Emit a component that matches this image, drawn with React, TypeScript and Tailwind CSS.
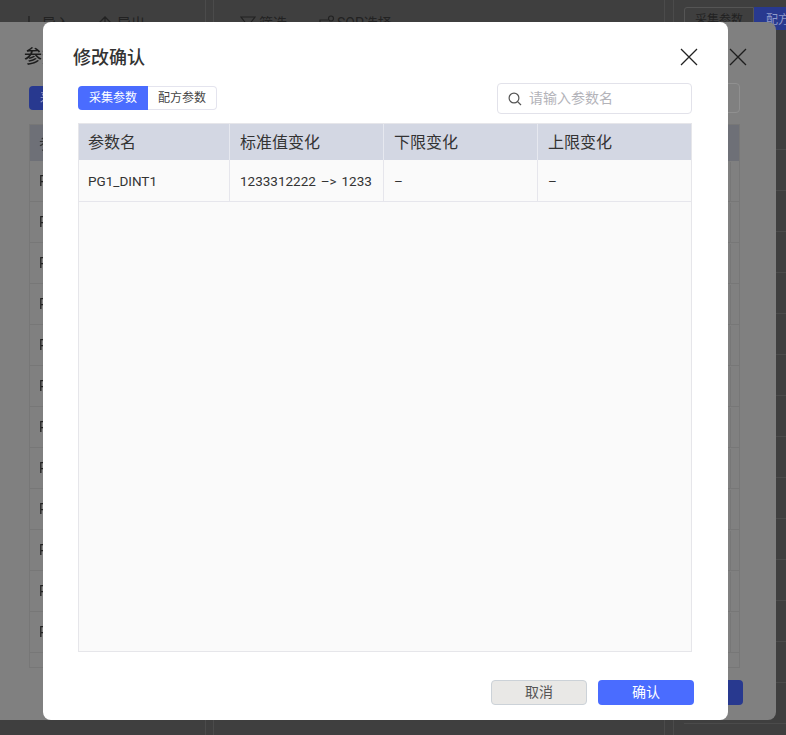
import React from "react";

const font = { fontFamily: 'Roboto, "Noto Sans CJK SC", sans-serif' };

function CloseIcon({ size = 20, className = "" }: { size?: number; className?: string }) {
  return (
    <svg width={size} height={size} viewBox="0 0 20 20" fill="none" stroke="currentColor" strokeWidth={1.25} className={className}>
      <path d="M2 2 L18 18 M18 2 L2 18" />
    </svg>
  );
}

function ArrowIcon({ up = false }: { up?: boolean }) {
  return (
    <svg width="14" height="16" viewBox="0 0 14 16" fill="none" stroke="#222" strokeWidth="1.3">
      {up ? <path d="M7 15 V2 M1.5 7.5 L7 2 L12.5 7.5" /> : <path d="M7 1 V14 M1.5 8.5 L7 14 L12.5 8.5" />}
    </svg>
  );
}

function Background() {
  const rows = Array.from({ length: 12 });
  return (
    <div className="flex h-full w-full">
      <div className="w-[206px] shrink-0 border-r border-[#4b4b4b] pl-[22px] pt-[13px]">
        <div className="flex items-center text-[14px] leading-[20px] text-[#222]">
          <ArrowIcon />
          <span className="ml-[6px] w-[56px]">导入</span>
          <ArrowIcon up />
          <span className="ml-[5px]">导出</span>
        </div>
      </div>
      <div className="ml-[7px] w-[452px] shrink-0 border-x border-[#4b4b4b] pl-[26px] pt-[13px]">
        <div className="flex items-center text-[14px] leading-[20px] text-[#222]">
          <svg width="16" height="16" viewBox="0 0 16 16" fill="none" stroke="#222" strokeWidth="1.2">
            <path d="M1 2 H15 L8 11 Z" />
          </svg>
          <span className="ml-[3px] w-[60px]">筛选</span>
          <svg width="16" height="16" viewBox="0 0 16 16" fill="none" stroke="#222" strokeWidth="1.2">
            <path d="M1 14 V5 H9" />
            <circle cx="12" cy="3.5" r="2.5" />
          </svg>
          <span className="ml-[2px]">SOP选择</span>
        </div>
      </div>
      <div className="ml-[8px] flex-1 border-l border-[#4b4b4b] pl-[10px] pt-[7px]">
        <div className="flex w-[120px] items-start">
          <span className="h-[24px] w-[70px] shrink-0 rounded-l-[3px] border border-[#555] text-center text-[12px] leading-[24px] text-[#222]">采集参数</span>
          <span className="h-[23px] w-[50px] shrink-0 whitespace-nowrap bg-[#28398f] pl-[12px] text-[12px] leading-[26px] text-[#8f9ac9]">配方</span>
        </div>
        <div className="flex flex-col pt-[78px]">
          {Array.from({ length: 15 }).map((_, i) => (
            <div key={i} className="h-[41px] border-b border-[#4b4b4b]" />
          ))}
        </div>
      </div>
      <div className="absolute left-[-20px] top-[22px] flex h-[698px] w-[796px] flex-col rounded-[8px] bg-[#808080] pl-[49px] pr-[36px] pt-[25px] [will-change:transform]">
        <div className="flex items-center justify-between">
          <span className="ml-[-5px] text-[18px] font-medium leading-[20px] text-[#1c1c1c]">参数配置</span>
          <CloseIcon size={20} className="mr-[-8px] text-[#1e1e1e]" />
        </div>
        <div className="mt-[16px] flex items-start justify-between">
          <div className="mt-[3px] flex h-[24px] w-[70px] items-center justify-center rounded-[4px] bg-[#28398f] text-[12px] text-[#9aa3cf]">采集参数</div>
          <div className="h-[30px] w-[195px] rounded-[4px] border border-[#909090]" />
        </div>
        <div className="mt-[11px] flex h-[544px] flex-col border border-[#777]">
          <div className="flex h-[36px] shrink-0 items-center bg-[#6e7077] pl-[9px] pt-[2px] text-[16px] text-[#333]">参数名</div>
          {rows.map((_, i) => (
            <div key={i} className="flex h-[41px] shrink-0 items-center border-b border-[#777] pl-[9px] pt-[1px] text-[14px]">
              <span className="text-[#222]">PG1_DINT{i + 1}</span>
              <div className="ml-auto mr-[8px] h-full border-l border-[#777]" />
            </div>
          ))}
        </div>
        <div className="mr-[-3px] mt-auto mb-[15px] flex justify-end">
          <div className="h-[25px] w-[96px] rounded-[4px] bg-[#28398f]" />
        </div>
      </div>
    </div>
  );
}

const cols = ["w-[151px]", "w-[154px]", "w-[154px]", "flex-1"];
const heads = ["参数名", "标准值变化", "下限变化", "上限变化"];
const cells = ["PG1_DINT1", "1233312222 –> 1233", "–", "–"];

function Modal() {
  return (
    <div className="absolute left-[42.5px] top-[22px] flex h-[698px] w-[685.5px] flex-col rounded-[8px] bg-white pl-[35.5px] pr-[36px]">
      <div className="flex h-[61px] shrink-0 items-start justify-between pt-[25px]">
        <h2 className="ml-[-5px] mt-[1px] text-[18px] font-medium leading-[20px] text-[#333]">修改确认</h2>
        <CloseIcon size={20} className="mr-[-7px] text-[#222]" />
      </div>
      <div className="flex h-[31px] shrink-0 items-center justify-between">
        <div className="mt-[-1px] flex h-[24px] w-[139px] text-[12px]">
          <div className="flex w-[70px] items-center justify-center rounded-l-[4px] bg-[#4a6cff] text-white">采集参数</div>
          <div className="flex flex-1 items-center justify-center rounded-r-[4px] border border-l-0 border-[#e4e4ee] bg-white text-[#444]">配方参数</div>
        </div>
        <div className="flex h-[31px] w-[195px] items-center gap-[7px] rounded-[4px] border border-[#e2e2ea] pl-[10px]">
          <svg width="14" height="14" viewBox="0 0 14 14" fill="none" stroke="#555" strokeWidth="1.2">
            <circle cx="6" cy="6" r="4.9" />
            <path d="M9.6 9.6 L13 13" />
          </svg>
          <span className="text-[14px] text-[#b3b3b9]">请输入参数名</span>
        </div>
      </div>
      <div className="mt-[9px] flex h-[529px] shrink-0 flex-col border border-[#e6e6ea] bg-[#fafafa]">
        <div className="flex h-[36px] shrink-0 bg-[#d3d7e3] text-[16px] text-[#333]">
          {heads.map((h, i) => (
            <div key={h} className={`${cols[i]} flex items-center pt-[2px] ${i === 0 ? "pl-[9px]" : "pl-[10px]"} ${i < 3 ? "border-r border-[#e6e8ef]" : ""}`}>
              {h}
            </div>
          ))}
        </div>
        <div className="flex h-[42px] shrink-0 border-b border-[#e6e6ec] text-[13.5px] text-[#333]">
          {cells.map((c, i) => (
            <div key={i} className={`${cols[i]} flex items-center pt-[2px] [word-spacing:1.5px] ${i === 0 ? "pl-[9px]" : "pl-[10px]"} ${i < 3 ? "border-r border-[#e6e6ec]" : ""}`}>
              {c}
            </div>
          ))}
        </div>
      </div>
      <div className="mr-[-2px] mt-[28px] flex justify-end gap-[11px] text-[14px]">
        <button className="h-[25px] w-[96px] rounded-[4px] border border-[#ccd2d8] bg-[#e9e8e6] text-[#555]">取消</button>
        <button className="h-[25px] w-[96px] rounded-[4px] bg-[#4a6cff] text-white">确认</button>
      </div>
    </div>
  );
}

export default function App() {
  return (
    <div className="relative h-[735px] w-[786px] overflow-hidden bg-[#3f3f3f]" style={font}>
      <Background />
      <Modal />
    </div>
  );
}
